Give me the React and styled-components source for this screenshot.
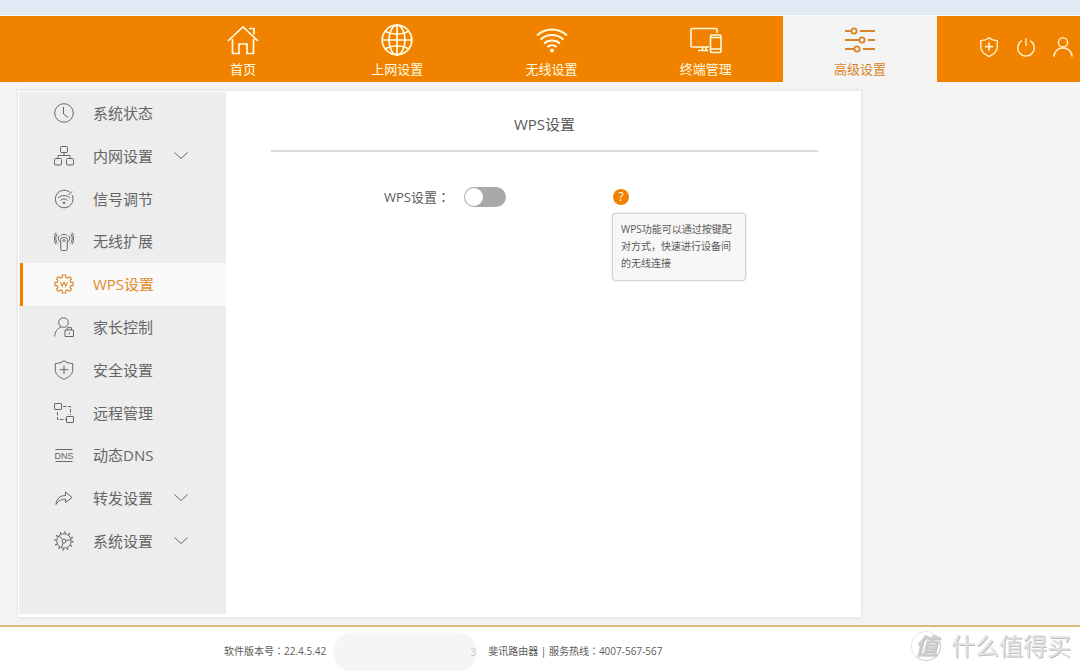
import React, { useState } from 'react';
import styled, { createGlobalStyle } from 'styled-components';

const orange = '#f08200';
const grey = '#666';

const GlobalStyle = createGlobalStyle`
  * {
    box-sizing: border-box;
  }

  body {
    margin: 0;
    background: #f4f4f4;
    font-family: 'Open Sans', 'Noto Sans CJK SC', sans-serif;
    color: #5a5a5a;
  }

  ul {
    margin: 0;
    padding: 0;
    list-style: none;
  }

  a {
    color: inherit;
    text-decoration: none;
  }

  svg {
    display: block;
    fill: none;
    stroke: currentColor;
  }
`;

const Page = styled.div`
  display: flex;
  flex-direction: column;
  min-height: 100vh;
  overflow-x: hidden;
`;

// Franja clara por encima de la cabecera
const TopStrip = styled.div`
  height: 16px;
  background: #e0eaf4;
  border-bottom: 1px solid #fafafa;
`;

const Header = styled.header`
  display: flex;
  justify-content: space-between;
  height: 66px;
  padding-left: 166px;
  background: ${orange};
`;

const Nav = styled.nav`
  display: flex;
  flex: 0 1 771px;
`;

const NavLink = styled.a`
  flex: 1;
  display: flex;
  flex-direction: column;
  align-items: center;
  gap: 4px;
  padding-top: 8px;
  font-size: 13px;
  line-height: 18px;
  white-space: nowrap;
  color: ${(props) => (props.$active ? '#d98527' : '#fffbe0')};
  background: ${(props) => (props.$active ? '#f4f4f4' : 'transparent')};
`;

const Actions = styled.div`
  display: flex;
  align-items: center;
  gap: 15px;
  padding: 0 6px 4px 0;
`;

const IconButton = styled.button`
  padding: 0;
  border: 0;
  background: none;
  color: #ffeec0;
  cursor: pointer;
`;

const Panel = styled.div`
  display: flex;
  max-width: 843px;
  min-height: 526px;
  margin: 9px 18px 8px;
  padding: 1px 0 3px 1px;
  background: #fff;
  box-shadow: 0 0 4px rgba(0, 0, 0, 0.12);
`;

const Sidebar = styled.aside`
  flex: 0 0 207px;
  background: #ededed;
`;

const Menu = styled.ul`
  display: grid;
  grid-auto-rows: 1fr;
  min-height: 471px;
`;

const MenuItem = styled.li`
  display: flex;
`;

const MenuLink = styled.a`
  flex: 1;
  display: flex;
  align-items: center;
  margin-left: 1px;
  padding: 0 0 1px 31px;
  border-left: 3px solid ${(props) => (props.$active ? orange : 'transparent')};
  background: ${(props) => (props.$active ? '#fafafa' : 'transparent')};
  color: ${(props) => (props.$active ? '#e08a2c' : grey)};
  font-size: 15px;
  line-height: 20px;
`;

const MenuText = styled.span`
  width: 80px;
  margin-left: 19px;
`;

const Content = styled.main`
  flex: 1;
  padding: 20px 43px 0 45px;
`;

const Title = styled.h1`
  margin: 0;
  padding-bottom: 14px;
  border-bottom: 2px solid #dadada;
  font-size: 15px;
  font-weight: 400;
  line-height: 24px;
  text-align: center;
`;

const FormRow = styled.div`
  display: flex;
  align-items: center;
  margin-top: 34px;
  padding-left: 113px;
`;

const Label = styled.label`
  width: 80px;
  font-size: 13px;
  line-height: 22px;
  white-space: nowrap;
`;

// Los dos puntos van centrados en su casilla
const Colon = styled.span`
  font-family: 'Noto Sans CJK TC', sans-serif;
`;

const Switch = styled.input`
  appearance: none;
  width: 42px;
  height: 20px;
  margin: 0 107px 0 0;
  padding: 1px;
  border-radius: 10px;
  background: ${(props) => (props.checked ? orange : '#a9a9a9')};
  cursor: pointer;

  &::before {
    content: '';
    display: block;
    width: 18px;
    height: 18px;
    margin-left: ${(props) => (props.checked ? '22px' : '0')};
    border-radius: 50%;
    background: #fff;
  }
`;

const Help = styled.div`
  position: relative;
`;

const HelpButton = styled.button`
  display: block;
  width: 16px;
  height: 16px;
  padding: 0;
  border: 0;
  border-radius: 50%;
  background: ${orange};
  color: #fff;
  font-family: inherit;
  font-size: 12px;
  line-height: 16px;
`;

const Tooltip = styled.div`
  position: absolute;
  top: 24px;
  left: -1px;
  width: 134px;
  padding: 7px 8px 8px;
  border: 1px solid #d4d4d4;
  border-radius: 4px;
  background: #f7f7f7;
  box-shadow: 0 0 2px rgba(0, 0, 0, 0.2);
  font-size: 10px;
  line-height: 17px;
`;

const Footer = styled.footer`
  flex: 1;
  display: flex;
  align-items: center;
  min-height: 46px;
  padding: 0 9px 0 224px;
  border-top: 2px solid #d8bb7c;
  background: #fff;
  font-size: 10px;
  line-height: 16px;
  white-space: nowrap;
`;

const FooterText = styled.span`
  padding-top: 3px;
`;

// Zona difuminada que tapa la dirección del equipo
const Smudge = styled.div`
  align-self: flex-end;
  display: flex;
  align-items: center;
  justify-content: flex-end;
  width: 142px;
  height: 38px;
  margin: 0 12px 0 8px;
  border-radius: 24px;
  background: #f5f5f5;
  box-shadow: 0 0 4px #f5f5f5;
  color: #c4c8cc;
`;

const Watermark = styled.div`
  display: flex;
  align-items: center;
  gap: 10px;
  margin-left: auto;
  padding-bottom: 7px;
  color: #e4e4e4;
  font-size: 24px;
  line-height: 32px;
  text-shadow: 1px 1px 0 #bdbdbd;
`;

const Seal = styled.span`
  width: 30px;
  height: 30px;
  border: 1px solid #e8e8e8;
  border-right-color: #c4c4c4;
  border-bottom-color: #c4c4c4;
  border-radius: 50%;
  color: #d0d0d0;
  font-size: 23px;
  font-style: italic;
  font-weight: 500;
  line-height: 26px;
  text-align: center;
`;

const shield = 'M12 2C9 4.500 6 5 3 5v7c0 5 4 8 9 10.500 5-2.500 9-5.500 9-10.500V5c-3 0-6-.5-9-3z';

// Dibujos de la cabecera, en una caja de 32 x 32
const navIcons = {
  home: (
    <g strokeWidth="1.700">
      <path d="M1 17 16 3l15 14M22 4.500h5v6M5.500 15v14.500H12V20h8v9.500h6.500V15" />
    </g>
  ),
  globe: (
    <g strokeWidth="1.700">
      <circle cx="16" cy="16" r="14.800" />
      <ellipse cx="16" cy="16" rx="8" ry="14.800" />
      <path d="M16 1v30M1 16h30M4.500 7.500Q16 13 27.500 7.500M4.500 24.500Q16 19 27.500 24.500" />
    </g>
  ),
  wifi: (
    <g strokeWidth="1.900">
      <path d="M1 11.500C9.500 3.500 22.500 3.500 31 11.500M4.500 15.500c6.500-6 16.500-6 23 0M8 19.500c4.500-4 11.500-4 16 0M11.500 23c2.500-2.500 6.500-2.500 9 0" />
      <circle cx="16" cy="26.500" r="2" fill="currentColor" stroke="none" />
    </g>
  ),
  devices: (
    <g strokeWidth="1.600">
      <path d="M27 9V5.500a1 1 0 0 0-1-1H2a1 1 0 0 0-1 1V22a1 1 0 0 0 1 1h17M12.500 23v3M16 23v3M8 26.500h10" />
      <rect x="20.500" y="11" width="10.500" height="17.500" rx="1" />
      <path d="M20.500 13.500H31M20.500 25H31" />
    </g>
  ),
  sliders: (
    <g strokeWidth="1.800">
      <path d="M1 7h6.500M16 7h15M1 16h14.500M24 16h7M1 25h9.500M19 25h12" />
      <circle cx="10" cy="7" r="2.600" />
      <circle cx="18" cy="16" r="2.600" />
      <circle cx="13" cy="25" r="2.600" />
    </g>
  ),
};

// Dibujos del menú lateral, en una caja de 20 x 20
const menuIcons = {
  clock: <path d="M10 .7a9.300 9.300 0 1 0 0 18.600A9.300 9.300 0 0 0 10 .7zM9.500 4v7l4.500 3.500" />,
  network: (
    <>
      <rect x="6.500" y=".5" width="7" height="6" rx="1" />
      <rect x=".5" y="12.500" width="7" height="6.500" rx="1" />
      <rect x="12.500" y="12.500" width="7" height="6.500" rx="1" />
      <path d="M10 6.500v3M4 12.500v-3h12v3" />
    </>
  ),
  signal: (
    <>
      <path d="M15.500 3A8.800 8.800 0 1 0 18 6M18 2.500 14.500 6M4 9c3.500-3.300 8.500-3.300 12 0M6.500 11.500c2-2 5-2 7 0" />
      <circle cx="10" cy="13.800" r=".8" fill="currentColor" />
    </>
  ),
  extend: (
    <>
      <rect x="6.700" y="6.500" width="6.600" height="13" rx="1.800" />
      <circle cx="10" cy="9.500" r="1" />
      <path d="M5.500 4.500c-1.700 1.500-1.700 4.500 0 6M14.500 4.500c1.700 1.500 1.700 4.500 0 6M3.500 2.800c-2.300 2.500-2.300 7 0 9.500M16.500 2.800c2.300 2.500 2.300 7 0 9.500M2 1.500c-2 3-2 9 0 12M18 1.500c2 3 2 9 0 12M7 4.500c2-1.500 4-1.500 6 0" />
    </>
  ),
  wps: (
    <>
      <path
        strokeWidth="1.200"
        d="M8.300 1h3.400v2.300l2 .8L15.400 2.500l2.200 2.200L16 6.300l.8 2H19v3.400h-2.200l-.8 2 1.600 1.600-2.200 2.200-1.700-1.600-2 .8V19H8.300v-2.300l-2-.8-1.700 1.600-2.200-2.200L4 13.700l-.8-2H1V8.300h2.200l.8-2-1.600-1.600 2.200-2.200 1.700 1.600 2-.8z"
      />
      <path d="m6.500 8 1.700 4.300L10 8l1.800 4.300L13.500 8" strokeWidth="1.100" />
    </>
  ),
  parent: (
    <>
      <circle cx="9.500" cy="5.500" r="4.800" />
      <path d="M.7 19.500c0-4.500 2.500-8 6.500-9.500M11 13h8.500v6.500H11zM13 13v-2.300h4.500V13M15.300 15.300v2" />
    </>
  ),
  shield: <path d="M10 .7C7.500 2.700 4.500 3.500 1.300 3.500V10c0 4.700 4.200 7.300 8.700 9.300 4.500-2 8.700-4.600 8.700-9.300V3.500c-3.200 0-6.200-.8-8.700-2.800zM10 5.500v8.500M5.700 9.700h8.600" />,
  remote: (
    <>
      <rect x=".5" y=".5" width="7" height="6" rx=".5" />
      <rect x="12.500" y="13.500" width="7" height="6" rx=".5" />
      <path d="M9 3.500h7.500V12M3.500 9v7.500H12" strokeDasharray="3.500 1.500" />
    </>
  ),
  dns: (
    <>
      <path d="M1.500 4.500h17M1.500 16.500h17" />
      <text x="10" y="13.500" fontSize="9" fontFamily="Liberation Sans, sans-serif" textAnchor="middle" fill="currentColor" stroke="none">
        DNS
      </text>
    </>
  ),
  forward: <path d="M2 16.500C2.500 10.500 6 7.500 11.500 7.500V4l6.500 5.500-6.500 5v-3.300c-4.500 0-7 1.300-9.500 5.300z" />,
  system: (
    <>
      <circle cx="10" cy="10" r="7.200" />
      <circle cx="10" cy="10" r="8.700" strokeDasharray="1.400 3.155" strokeWidth="1.800" />
      <circle cx="10" cy="10" r="2" />
      <path d="M8.500 8.500 5 4.500M12 9.500l5-1M9 12l-1.500 4.500" />
    </>
  ),
};

const navItems = [
  { icon: 'home', text: '首页' },
  { icon: 'globe', text: '上网设置' },
  { icon: 'wifi', text: '无线设置' },
  { icon: 'devices', text: '终端管理' },
  { icon: 'sliders', text: '高级设置' },
];

const menuItems = [
  { icon: 'clock', text: '系统状态' },
  { icon: 'network', text: '内网设置', open: true },
  { icon: 'signal', text: '信号调节' },
  { icon: 'extend', text: '无线扩展' },
  { icon: 'wps', text: 'WPS设置' },
  { icon: 'parent', text: '家长控制' },
  { icon: 'shield', text: '安全设置' },
  { icon: 'remote', text: '远程管理' },
  { icon: 'dns', text: '动态DNS' },
  { icon: 'forward', text: '转发设置', open: true },
  { icon: 'system', text: '系统设置', open: true },
];

const App = () => {
  const [enabled, setEnabled] = useState(false);

  return (
    <Page>
      <GlobalStyle />
      <TopStrip />
      <Header>
        <Nav>
          {navItems.map((item) => (
            <NavLink href="#" key={item.text} $active={item.icon === 'sliders'}>
              <svg width="32" height="32" viewBox="0 0 32 32">{navIcons[item.icon]}</svg>
              {item.text}
            </NavLink>
          ))}
        </Nav>
        <Actions>
          <IconButton aria-label="安全">
            <svg width="22" height="22" viewBox="0 0 24 24" strokeWidth="1.500">
              <path d={shield} />
              <path d="M12 7v9M7.500 11.500h9" strokeWidth="2" />
            </svg>
          </IconButton>
          <IconButton aria-label="重启">
            <svg width="22" height="22" viewBox="0 0 24 24" strokeWidth="1.500">
              <path d="M7.500 5a9 9 0 1 0 9 0M12 2.500V11" />
            </svg>
          </IconButton>
          <IconButton aria-label="账户">
            <svg width="22" height="22" viewBox="0 0 24 24" strokeWidth="1.600">
              <circle cx="12" cy="7" r="5" />
              <path d="M2 22.500c1-12.500 19-12.500 20 0" />
            </svg>
          </IconButton>
        </Actions>
      </Header>
      <Panel>
        <Sidebar>
          <Menu>
            {menuItems.map((item) => (
              <MenuItem key={item.text}>
                <MenuLink href="#" $active={item.icon === 'wps'}>
                  <svg width="20" height="20" viewBox="0 0 20 20">{menuIcons[item.icon]}</svg>
                  <MenuText>{item.text}</MenuText>
                  {item.open && (
                    <svg width="16" height="10" viewBox="0 0 16 10">
                      <path d="m1.500 1.500 6.500 6 6.500-6" />
                    </svg>
                  )}
                </MenuLink>
              </MenuItem>
            ))}
          </Menu>
        </Sidebar>
        <Content>
          <Title>WPS设置</Title>
          <FormRow>
            <Label htmlFor="wps">
              WPS设置<Colon>：</Colon>
            </Label>
            <Switch
              id="wps"
              type="checkbox"
              role="switch"
              checked={enabled}
              onChange={(e) => setEnabled(e.target.checked)}
            />
            <Help>
              <HelpButton aria-describedby="wps-help">?</HelpButton>
              <Tooltip id="wps-help" role="tooltip">
                WPS功能可以通过按键配对方式，快速进行设备间的无线连接
              </Tooltip>
            </Help>
          </FormRow>
        </Content>
      </Panel>
      <Footer>
        <FooterText>
          软件版本号<Colon>：</Colon>22.4.5.42
        </FooterText>
        <Smudge>3</Smudge>
        <FooterText>
          斐讯路由器 | 服务热线<Colon>：</Colon>4007-567-567
        </FooterText>
        <Watermark>
          <Seal>值</Seal>
          什么值得买
        </Watermark>
      </Footer>
    </Page>
  );
};

export default App;
